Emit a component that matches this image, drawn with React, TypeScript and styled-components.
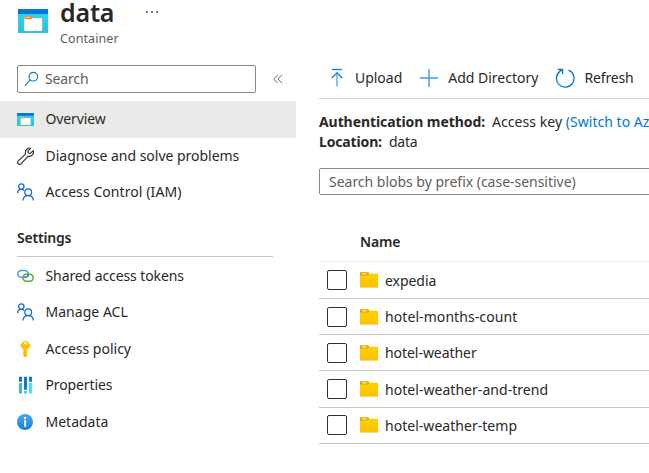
import React from 'react';
import styled, { createGlobalStyle } from 'styled-components';

const GlobalStyle = createGlobalStyle`
  * { box-sizing: border-box; }
  html, body { margin: 0; background: #fff; overflow: hidden; }
  body { font: 14px/20px "Noto Sans", "Open Sans", sans-serif; color: #292827; }
  svg { display: block; flex: none; }
`;

const Page = styled.div`
  display: flex;
  width: 649px;
  height: 473px;
  overflow: hidden;
`;
const Sidebar = styled.aside`
  width: 296px;
  flex: none;
`;
const Header = styled.header`
  display: flex;
  height: 65px;
  padding: 0 0 0 18px;
`;
const HeaderIcon = styled.div`
  padding-top: 9px;
  width: 42px;
`;
const Heading = styled.div`
  width: 84px;
`;
const Title = styled.h1`
  margin: -4px 0 0;
  font-size: 25px;
  line-height: 32px;
  font-weight: 600;
  letter-spacing: -0.2px;
`;
const Subtitle = styled.div`
  font-size: 12.5px;
  line-height: 21px;
  color: #605e5c;
`;
const More = styled.div`
  display: flex;
  gap: 3px;
  padding: 11px 0 0 2px;
`;
const Dot = styled.i`
  width: 2px;
  height: 2px;
  background: #777;
`;
const SearchRow = styled.div`
  display: flex;
  align-items: center;
  gap: 17px;
  height: 28px;
  padding-left: 17px;
  margin-bottom: 8px;
`;
const SearchBox = styled.div`
  display: flex;
  align-items: center;
  gap: 6px;
  width: 239px;
  height: 28px;
  padding-left: 6px;
  border: 1px solid #8a8886;
  border-radius: 2px;
  color: #605e5c;
`;
const Text = styled.span<{ $ls?: number }>`
  white-space: nowrap;
  letter-spacing: ${(p) => p.$ls ?? 0}px;
`;
const NavItem = styled.a<{ $active?: boolean }>`
  display: flex;
  align-items: center;
  height: 36.5px;
  padding-left: 17px;
  gap: 11.5px;
  background: ${(p) => (p.$active ? '#ebeae9' : 'transparent')};
`;
const SectionTitle = styled.h2`
  margin: 17px 23px 0.5px 17px;
  height: 29.5px;
  border-bottom: 1px solid #c8c6c4;
  font-size: 14px;
  line-height: 20px;
  font-weight: 600;
`;
const Main = styled.main`
  flex: none;
  width: 330px;
  margin-left: 23px;
  padding-top: 58px;
`;
const Toolbar = styled.div`
  display: flex;
  align-items: center;
  height: 41px;
  padding-left: 8px;
  border-bottom: 1px solid #d2d0ce;
`;
const Command = styled.div<{ $gap: number; $after?: number }>`
  display: flex;
  align-items: center;
  gap: ${(p) => p.$gap}px;
  margin-right: ${(p) => p.$after ?? 0}px;
`;
const Details = styled.div`
  padding-top: 13px;
  height: 69px;
`;
const Detail = styled.div`
  display: flex;
  gap: 7px;
`;
const Label = styled.b<{ $ls: number }>`
  font-weight: 700;
  white-space: nowrap;
  letter-spacing: ${(p) => p.$ls}px;
`;
const Link = styled.span`
  color: #0078d4;
  letter-spacing: 0.03px;
`;
const Filter = styled.div`
  display: flex;
  align-items: center;
  height: 27px;
  width: 360px;
  padding-left: 9px;
  border: 1px solid #8a8886;
  border-radius: 2px;
  color: #605e5c;
`;
const TableHead = styled.div`
  display: flex;
  align-items: center;
  height: 67px;
  padding: 28px 0 0 41px;
  font-weight: 600;
  border-bottom: 1px solid #edebe9;
`;
const BlobList = styled.div`
  padding-top: 0.6px;
`;
const BlobRow = styled.div`
  display: flex;
  align-items: center;
  height: 36.3px;
  padding-left: 8px;
  border-bottom: 1px solid #c8c6c4;
`;
const Checkbox = styled.div`
  width: 20px;
  height: 20px;
  margin-right: 13px;
  border: 1px solid #323130;
  border-radius: 2px;
`;
const FolderSlot = styled.div`
  width: 25px;
`;
const BlobName = styled(Text)`
  padding-top: 1px;
`;

const ContainerIcon = ({ w, h }: { w: number; h: number }) => (
  <svg width={w} height={h} viewBox="0 0 30 24" preserveAspectRatio="none">
    <defs>
      <linearGradient id="aqua" x1="0" y1="0" x2="0" y2="1">
        <stop offset="0" stopColor="#32d4f5" />
        <stop offset="1" stopColor="#30bddb" />
      </linearGradient>
    </defs>
    <rect width="30" height="24" rx=".6" fill="url(#aqua)" />
    <path d="M.6 0h28.8q.6 0 .6.6V5H0V.6Q0 0 .6 0Z" fill="#0078d4" />
    <path d="M6.5 8.4q0-1 1-1h5.8l1.5 1.6h8.6q.8 0 .8.8v11.6q0 .6-.6.6H6.7q-.6 0-.6-.6V10Z" fill="#fff" stroke="#b9b4a8" strokeWidth=".35" />
    <rect x="6.3" y="7.2" width="8.2" height="3" rx="1.4" fill="#f28a24" />
    <rect x="7.8" y="8" width="4" height="1.1" rx=".5" fill="#ffc58a" />
  </svg>
);

const SearchIcon = () => (
  <svg width="15" height="16" viewBox="0 0 15 16" fill="none" stroke="#0078d4" strokeWidth="1.1">
    <circle cx="9.3" cy="5.7" r="4.3" />
    <path d="M6.2 8.8.8 14.8" />
  </svg>
);

const CollapseIcon = () => (
  <svg width="10" height="10" viewBox="0 0 10 10" fill="none" stroke="#605e5c" strokeWidth=".9">
    <path d="M4.8.7.7 5l4.1 4.3M9.1.7 5 5l4.1 4.3" />
  </svg>
);

const WrenchIcon = () => (
  <svg width="17" height="18" viewBox="0 0 17 18" fill="none" stroke="#323130" strokeWidth="1.15" strokeLinejoin="round">
    <path d="M13.8 1.2 10.9 4l.3 2 2.1.4 2.9-2.8c.7 2.2-.1 4.2-1.8 5.2-1.1.7-2.3.7-3.3.4l-6.8 7.4c-.9.9-2.2.9-3 .2-.9-.9-.9-2.1 0-3l7.2-6.6c-.5-2.2.1-4.2 1.7-5.4C11.3.9 12.6.8 13.8 1.2Z" />
  </svg>
);

const PeopleIcon = () => (
  <svg width="17" height="18" viewBox="0 0 17 18" fill="none" stroke="#1a6dd9" strokeWidth="1.3">
    <circle cx="4.3" cy="3.6" r="2.7" />
    <path d="M.6 10.3c.1-2.5 1.6-4 3.7-4 1.2 0 2.1.4 2.8 1.2" />
    <circle cx="11.2" cy="9.2" r="3.4" />
    <path d="M5.9 17.5c.3-3 2.3-4.9 5.3-4.9s5 1.9 5.3 4.9" />
  </svg>
);

const LinkIcon = () => (
  <svg width="17" height="14" viewBox="0 0 17 14" fill="none" strokeWidth="1.6">
    <rect x=".9" y="1.5" width="10.3" height="6.8" rx="3.4" stroke="#4b9fe6" />
    <rect x="6" y="5.3" width="10.2" height="6.9" rx="3.4" stroke="#65ad2e" />
    <path d="M7.5 8.3h.7c2 0 3-1.4 3-3" stroke="#3389c9" />
  </svg>
);

const KeyIcon = () => (
  <svg width="17" height="18" viewBox="0 0 17 18">
    <path d="M8.3.4c.7 0 1.2.3 1.7.8l2.9 2.9c.8.8.8 1.9 0 2.700l-2.600 2.600v6.700l-2 1.700-2-1.700V9.400L3.700 6.800c-.8-.8-.8-1.900 0-2.700l2.900-2.900C7.100.7 7.600.4 8.300.4Z" fill="#ffc40c" />
    <circle cx="8.3" cy="3" r="1.3" fill="#fff" />
    <path d="M5.5 7.2h5.6M7.7 10v5.3" stroke="#f0a800" strokeWidth=".7" />
  </svg>
);

const PropertiesIcon = () => (
  <svg width="17" height="18" viewBox="0 0 17 18">
    <defs>
      <linearGradient id="bars" x1="0" y1="0" x2="1" y2="0">
        <stop offset="0" stopColor="#32b9d6" />
        <stop offset="1" stopColor="#4ee4ff" />
      </linearGradient>
    </defs>
    <path d="M2 .7h3v5H2zM7 .7h3v13H7zM12 .7h3v5h-3z" fill="#1478d0" />
    <path d="M2 7h3v10.5H2zM7 15h3v2.5H7zM12 7h3v10.5h-3z" fill="url(#bars)" />
  </svg>
);

const InfoIcon = () => (
  <svg width="17" height="18" viewBox="0 0 17 18">
    <defs>
      <linearGradient id="info" x1="0" y1="0" x2="0" y2="1">
        <stop offset="0" stopColor="#4ba5ea" />
        <stop offset="1" stopColor="#1583d6" />
      </linearGradient>
    </defs>
    <circle cx="8" cy="9" r="8" fill="url(#info)" />
    <circle cx="8.1" cy="4.9" r="1.2" fill="#fff" />
    <rect x="7.2" y="7.1" width="1.9" height="6.6" rx=".5" fill="#fff" />
  </svg>
);

const FolderIcon = () => (
  <svg width="18" height="16" viewBox="0 0 18 16">
    <defs>
      <linearGradient id="folder" x1="0" y1="0" x2="0" y2="1">
        <stop offset="0" stopColor="#ffd400" />
        <stop offset="1" stopColor="#ffc000" />
      </linearGradient>
    </defs>
    <path d="M0 .8Q0 .2.6.2H8l1.5 1.5H18V15.5H0Z" fill="url(#folder)" />
    <path d="M0 .8Q0 .2.6.2H8q1 0 1 1.4T7.8 3.5H0Z" fill="#dfa500" />
    <rect x="1.8" y="1.1" width="5" height="1.5" rx=".7" fill="#f5dfa0" />
    <path d="M0 15.5h18" stroke="#e9d28a" strokeWidth=".7" />
  </svg>
);

const UploadIcon = () => (
  <svg width="20" height="20" viewBox="0 0 20 20" fill="none" stroke="#0078d4">
    <path d="M5 1.5h10" strokeWidth="1.3" />
    <path d="M10 4.8V18.5" strokeWidth="1.4" opacity=".65" />
    <path d="m4.8 10 5.2-5.2L15.2 10" strokeWidth="1.2" />
  </svg>
);

const PlusIcon = () => (
  <svg width="18" height="18" viewBox="0 0 18 18" stroke="#0078d4" strokeWidth="1.4" opacity=".75">
    <path d="M9 0v18M0 9h18" />
  </svg>
);

const RefreshIcon = () => (
  <svg width="20" height="20" viewBox="0 0 20 20" fill="none" stroke="#0078d4" strokeWidth="1.3">
    <path d="M13.6 2.2A8.8 8.8 0 1 1 5.2 3.100L7.400 1.600" />
    <path d="M2.800 1.500h4.800v4.800" />
  </svg>
);

const general = [
  { text: 'Diagnose and solve problems', icon: <WrenchIcon />, ls: -0.02 },
  { text: 'Access Control (IAM)', icon: <PeopleIcon />, ls: 0.08 },
];
const settings = [
  { text: 'Shared access tokens', icon: <LinkIcon />, ls: -0.1 },
  { text: 'Manage ACL', icon: <PeopleIcon />, ls: 0.03 },
  { text: 'Access policy', icon: <KeyIcon />, ls: 0 },
  { text: 'Properties', icon: <PropertiesIcon />, ls: -0.12 },
  { text: 'Metadata', icon: <InfoIcon />, ls: 0 },
];
const blobs = [
  { name: 'expedia', ls: -0.05 },
  { name: 'hotel-months-count', ls: 0.08 },
  { name: 'hotel-weather', ls: -0.05 },
  { name: 'hotel-weather-and-trend', ls: 0.04 },
  { name: 'hotel-weather-temp', ls: 0.03 },
];

export default function App() {
  return (
    <>
      <GlobalStyle />
      <Page>
        <Sidebar>
          <Header>
            <HeaderIcon><ContainerIcon w={30} h={24} /></HeaderIcon>
            <Heading>
              <Title>data</Title>
              <Subtitle><Text $ls={0.1}>Container</Text></Subtitle>
            </Heading>
            <More><Dot /><Dot /><Dot /></More>
          </Header>
          <SearchRow>
            <SearchBox><SearchIcon /><Text $ls={-0.15}>Search</Text></SearchBox>
            <CollapseIcon />
          </SearchRow>
          <nav>
            <NavItem $active><ContainerIcon w={17} h={13} /><Text $ls={-0.12}>Overview</Text></NavItem>
            {general.map((i) => (
              <NavItem key={i.text}>{i.icon}<Text $ls={i.ls}>{i.text}</Text></NavItem>
            ))}
            <SectionTitle><Text $ls={-0.2}>Settings</Text></SectionTitle>
            {settings.map((i) => (
              <NavItem key={i.text}>{i.icon}<Text $ls={i.ls}>{i.text}</Text></NavItem>
            ))}
          </nav>
        </Sidebar>
        <Main>
          <Toolbar>
            <Command $gap={8} $after={18}><UploadIcon /><Text $ls={-0.03}>Upload</Text></Command>
            <Command $gap={10} $after={17}><PlusIcon /><Text $ls={0}>Add Directory</Text></Command>
            <Command $gap={9}><RefreshIcon /><Text $ls={-0.15}>Refresh</Text></Command>
          </Toolbar>
          <Details>
            <Detail>
              <Label $ls={-0.08}>Authentication method:</Label>
              <Text $ls={0.05}>Access key <Link>(Switch to Azure AD User Account)</Link></Text>
            </Detail>
            <Detail><Label $ls={-0.15}>Location:</Label><Text $ls={-0.2}>data</Text></Detail>
          </Details>
          <Filter><Text $ls={-0.02}>Search blobs by prefix (case-sensitive)</Text></Filter>
          <TableHead><Text $ls={-0.2}>Name</Text></TableHead>
          <BlobList>
            {blobs.map((b) => (
              <BlobRow key={b.name}>
                <Checkbox />
                <FolderSlot><FolderIcon /></FolderSlot>
                <BlobName $ls={b.ls}>{b.name}</BlobName>
              </BlobRow>
            ))}
          </BlobList>
        </Main>
      </Page>
    </>
  );
}
